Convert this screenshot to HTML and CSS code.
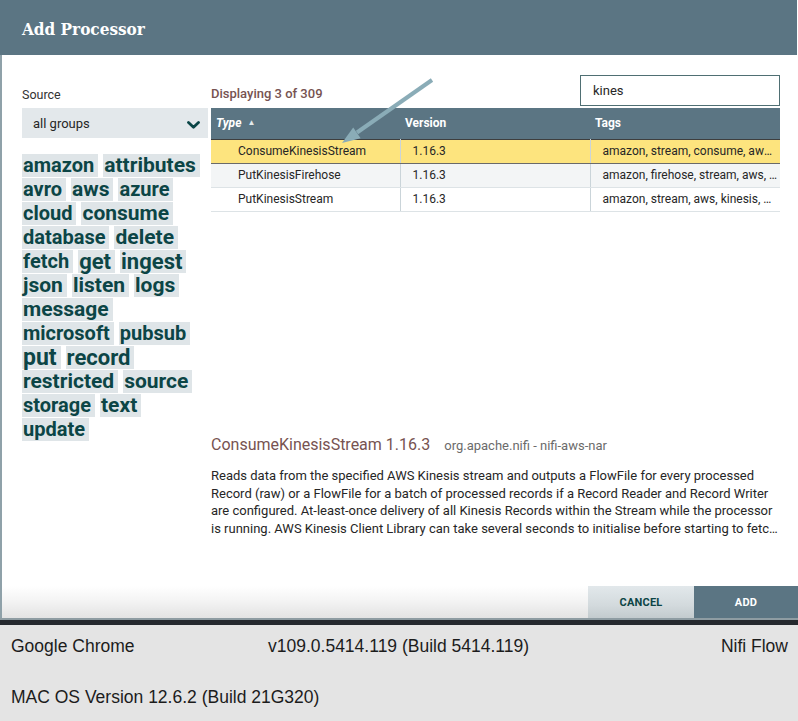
FILE: index.html
```html
<!DOCTYPE html>
<html lang="en">
<head>
<meta charset="utf-8">
<title>Add Processor</title>
<link rel="stylesheet" href="styles.css">
</head>
<body>
<div class="dialog">
  <header class="dialog-header">
    <h1 class="dialog-title">Add Processor</h1>
  </header>
  <div class="dialog-body">
    <div class="dialog-content">
      <aside class="filter-panel">
        <div class="field-label">Source</div>
        <div class="select">
          <span>all groups</span>
          <svg class="chevron" width="13" height="8" viewBox="0 0 13 8"><path d="M1.5 1.5 L6.5 6.2 L11.5 1.5" fill="none" stroke="#0b4647" stroke-width="2.8" stroke-linecap="round" stroke-linejoin="round"/></svg>
        </div>
        <ul class="tag-cloud">
          <li class="tag t20">amazon</li>
          <li class="tag t21">attributes</li>
          <li class="tag t20">avro</li>
          <li class="tag t21">aws</li>
          <li class="tag t20">azure</li>
          <li class="tag t20">cloud</li>
          <li class="tag t21">consume</li>
          <li class="tag t20">database</li>
          <li class="tag t21">delete</li>
          <li class="tag t20">fetch</li>
          <li class="tag t22">get</li>
          <li class="tag t22">ingest</li>
          <li class="tag t21">json</li>
          <li class="tag t21">listen</li>
          <li class="tag t21">logs</li>
          <li class="tag t21">message</li>
          <li class="tag t20">microsoft</li>
          <li class="tag t20">pubsub</li>
          <li class="tag t23">put</li>
          <li class="tag t22">record</li>
          <li class="tag t21">restricted</li>
          <li class="tag t21">source</li>
          <li class="tag t20">storage</li>
          <li class="tag t21">text</li>
          <li class="tag t20">update</li>
        </ul>
      </aside>
      <section class="types-panel">
        <div class="types-toolbar">
          <div class="count">Displaying 3 of 309</div>
          <input class="search" type="text" value="kines">
        </div>
        <div class="grid">
          <table class="types-table">
            <colgroup><col class="c-type"><col class="c-version"><col class="c-tags"></colgroup>
            <thead>
              <tr><th class="th-type">Type <span class="sort">&#9650;</span></th><th>Version</th><th>Tags</th></tr>
            </thead>
            <tbody>
              <tr class="selected"><td class="td-type">ConsumeKinesisStream</td><td>1.16.3</td><td class="td-tags">amazon, stream, consume, aws, kinesis, record</td></tr>
              <tr class="alt"><td class="td-type">PutKinesisFirehose</td><td>1.16.3</td><td class="td-tags">amazon, firehose, stream, aws, put</td></tr>
              <tr><td class="td-type">PutKinesisStream</td><td>1.16.3</td><td class="td-tags">amazon, stream, aws, kinesis, put</td></tr>
            </tbody>
          </table>
        </div>
        <div class="desc-title">
          <span class="desc-name">ConsumeKinesisStream 1.16.3</span>
          <span class="desc-bundle">org.apache.nifi - nifi-aws-nar</span>
        </div>
        <p class="desc-text">Reads data from the specified AWS Kinesis stream and outputs a FlowFile for every processed Record (raw) or a FlowFile for a batch of processed records if a Record Reader and Record Writer are configured. At-least-once delivery of all Kinesis Records within the Stream while the processor is running. AWS Kinesis Client Library can take several seconds to initialise before starting to fetch data.</p>
      </section>
    </div>
    <div class="dialog-actions">
      <button class="btn btn-cancel">CANCEL</button>
      <button class="btn btn-add">ADD</button>
    </div>
  </div>
</div>
<div class="separator"></div>
<footer class="sysinfo">
  <div class="sysinfo-row">
    <span>Google Chrome</span>
    <span>v109.0.5414.119 (Build 5414.119)</span>
    <span class="right">Nifi Flow</span>
  </div>
  <div class="sysinfo-row single">
    <span>MAC OS Version 12.6.2 (Build 21G320)</span>
  </div>
</footer>
<svg class="annotation-arrow" width="798" height="721" viewBox="0 0 798 721">
  <line x1="432" y1="80" x2="357" y2="132.5" stroke="#8aacb7" stroke-width="4"/>
  <polygon points="342,143 360.6,138.2 353.2,127.4" fill="#8aacb7"/>
</svg>
</body>
</html>
```
FILE: styles.css
```css
* { box-sizing: border-box; }

html, body {
  margin: 0;
  padding: 0;
}

body {
  width: 798px;
  height: 721px;
  overflow: hidden;
  position: relative;
  background: #e4e4e4;
  font-family: Roboto, "Liberation Sans", sans-serif;
  color: #262626;
}

.dialog {
  height: 620px;
  display: flex;
  flex-direction: column;
  background: #fff;
  border-bottom: 2px solid #8e9ca2;
}

.dialog-header {
  height: 55px;
  flex: none;
  background: #5b7583;
  display: flex;
  align-items: center;
  padding-left: 22px;
  margin-right: 1px;
}

.dialog-title {
  margin: 0;
  font-family: "DejaVu Serif Condensed", "DejaVu Serif", serif;
  font-weight: bold;
  font-size: 17px;
  color: #fff;
  padding-top: 2px;
}

.dialog-body {
  flex: 1;
  display: flex;
  flex-direction: column;
  border-left: 2px solid #8fa1a9;
}

.dialog-content {
  flex: 1;
  display: flex;
  gap: 3px;
  padding: 20px 18px 0 20px;
}

/* left filter panel */
.filter-panel {
  width: 186px;
  flex: none;
}

.field-label {
  height: 33px;
  display: flex;
  align-items: flex-end;
  padding-bottom: 6px;
  font-size: 12.5px;
  line-height: 14px;
  color: #333;
}

.select {
  height: 30px;
  background: #e3e8eb;
  display: flex;
  align-items: center;
  justify-content: space-between;
  padding: 0 8px 0 11px;
  font-size: 13px;
  color: #262626;
}

.chevron { margin-top: 3px; }

.tag-cloud {
  list-style: none;
  margin: 16px 0 0;
  padding: 0;
  width: 180px;
  display: flex;
  flex-wrap: wrap;
  column-gap: 5px;
  row-gap: 1px;
}

.tag {
  height: 23px;
  line-height: 23px;
  padding: 0 4px 0 1px;
  background: #dfe5e8;
  color: #0c4546;
  font-weight: bold;
  white-space: nowrap;
}

.t20 { font-size: 20px; }
.t21 { font-size: 21px; }
.t22 { font-size: 22px; }
.t23 { font-size: 23px; }

/* right types panel */
.types-panel {
  width: 569px;
  flex: none;
  display: flex;
  flex-direction: column;
}

.types-toolbar {
  height: 33px;
  display: flex;
  justify-content: space-between;
  align-items: flex-start;
}

.count {
  align-self: flex-end;
  padding-bottom: 7px;
  font-size: 13px;
  line-height: 14px;
  font-weight: 500;
  color: #775351;
}

.search {
  width: 200px;
  height: 31px;
  margin: 0;
  border: 1px solid #4f6f73;
  border-radius: 0;
  padding: 0 12px;
  font-family: Roboto, sans-serif;
  font-size: 13px;
  color: #262626;
  background: #fff;
  outline: none;
}

.grid {
  height: 327px;
}

.types-table {
  width: 569px;
  table-layout: fixed;
  border-collapse: collapse;
  font-size: 12px;
}

.c-type { width: 189px; }
.c-version { width: 190px; }
.c-tags { width: 190px; }

.types-table th {
  height: 31px;
  padding: 0 5px;
  background: #5b7583;
  color: #fff;
  text-align: left;
  font-weight: bold;
  font-size: 12px;
}

.th-type { font-style: italic; }

.sort {
  font-size: 8px;
  font-style: normal;
  color: #e3e9ec;
  vertical-align: 2px;
  margin-left: 3px;
}

.types-table td {
  height: 24px;
  padding: 0 12px;
  border-right: 1px solid #cad4d9;
  border-bottom: 1px solid #dde3e6;
  white-space: nowrap;
  overflow: hidden;
  text-overflow: ellipsis;
  color: #262626;
}

.types-table td:last-child { border-right: none; }

.types-table td.td-type { padding-left: 27px; }

.types-table td.td-tags { padding-right: 2px; }

.types-table tr.selected td {
  background: #fde47e;
  border-top: 1px solid #3e3e3e;
  border-bottom: 1px solid #6a6a6a;
}

.types-table tr.alt td { background: #f3f5f6; }

.desc-title {
  display: flex;
  align-items: baseline;
  gap: 14px;
  height: 20px;
  line-height: 20px;
}

.desc-name {
  font-size: 16px;
  color: #775351;
}

.desc-bundle {
  font-size: 13px;
  color: #6b6b6b;
}

.desc-text {
  margin: 12px 0 0;
  font-size: 13px;
  line-height: 17.5px;
  color: #262626;
  display: -webkit-box;
  -webkit-line-clamp: 4;
  -webkit-box-orient: vertical;
  overflow: hidden;
}

/* actions */
.dialog-actions {
  height: 32px;
  flex: none;
  display: flex;
  justify-content: flex-end;
  background: linear-gradient(to bottom, #ffffff 0%, #f4f4f4 45%, #e3e3e3 100%);
}

.btn {
  height: 32px;
  border: none;
  margin: 0;
  font-family: Roboto, sans-serif;
  font-weight: bold;
  font-size: 11px;
  letter-spacing: 0.2px;
  cursor: pointer;
}

.btn-cancel {
  width: 106px;
  background: linear-gradient(to bottom, #e2e8eb 0%, #d3dadd 60%, #c3cbce 100%);
  color: #0c4546;
}

.btn-add {
  width: 104px;
  background: #5b7583;
  color: #fff;
}

.separator {
  height: 5px;
  background: #25292e;
}

/* footer system info */
.sysinfo {
  height: 96px;
  padding: 11px 10px 0 11px;
  font-family: "Liberation Sans", Arial, sans-serif;
  font-size: 17.5px;
  line-height: 20px;
  color: #1c1c1c;
}

.sysinfo-row {
  display: grid;
  grid-template-columns: 257px 1fr auto;
  height: 20px;
}

.sysinfo-row.single {
  display: block;
  margin-top: 31px;
}

.annotation-arrow {
  position: absolute;
  left: 0;
  top: 0;
  pointer-events: none;
}
```
